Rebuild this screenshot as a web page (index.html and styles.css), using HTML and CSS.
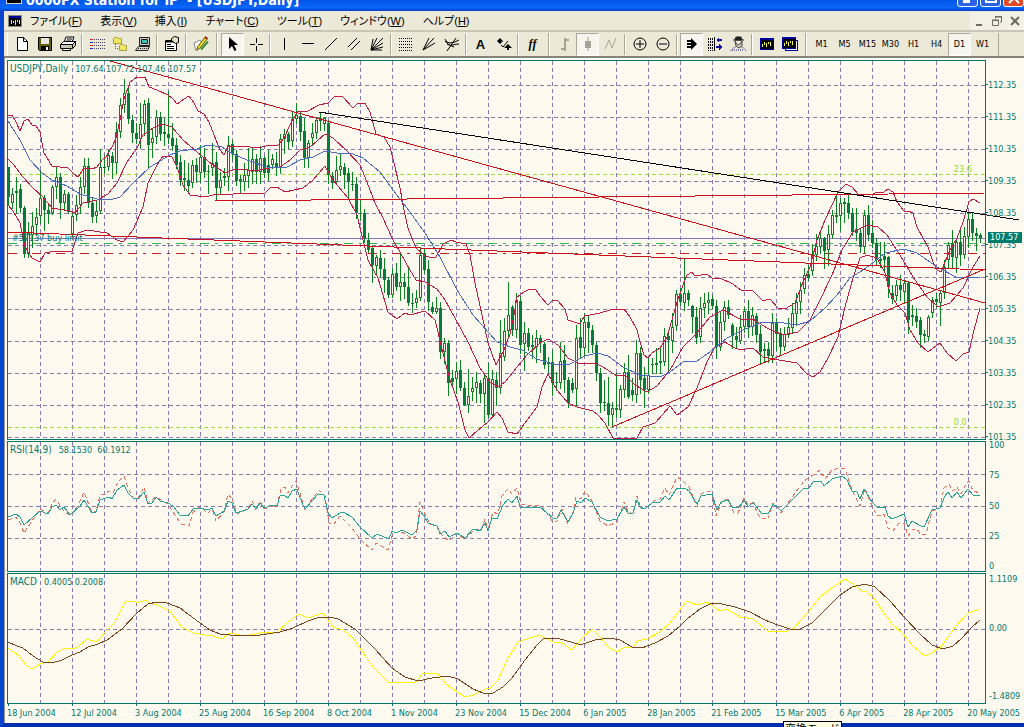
FILE: index.html
```html
<!DOCTYPE html>
<html lang="ja">
<head>
    <meta charset="UTF-8">
    <meta name="viewport" content="width=device-width, initial-scale=1.0">
    <title>FX Station - [USDJPY,Daily]</title>
    <link rel="stylesheet" href="styles.css">
</head>
<body>
    <header class="titlebar">
        <svg class="app-icon" width="16" height="14" viewBox="0 0 16 14"><rect width="16" height="14" fill="#d8d4c8"/><rect x="1" y="1" width="14" height="12" fill="#000"/><path d="M3 9l2-4 2 5 2-5 2 4 2-4" stroke="#ff0" fill="none"/></svg>
        <h1>0000FX Station for IP&nbsp; - [USDJPY,Daily]</h1>
        <div class="window-buttons">
            <button type="button" aria-label="Minimize"><svg width="20" height="20" viewBox="0 0 20 20"><path d="M5 13h7v3H5z" fill="#fff"/></svg></button>
            <button type="button" aria-label="Maximize"><svg width="20" height="20" viewBox="0 0 20 20"><path d="M5 5h10v10H5z" fill="none" stroke="#fff" stroke-width="2"/></svg></button>
            <button type="button" class="close" aria-label="Close"><svg width="20" height="20" viewBox="0 0 20 20"><path d="M5 6l10 10M15 6L5 16" stroke="#fff" stroke-width="2"/></svg></button>
        </div>
    </header>

    <main class="window">
        <nav class="menubar">
            <svg class="menu-icon" width="14" height="12" viewBox="0 0 14 12" shape-rendering="crispEdges"><rect width="14" height="12" fill="#8a8a80"/><rect x="1" y="1" width="12" height="2" fill="#0000a0"/><rect x="1" y="3" width="12" height="8" fill="#000"/><path d="M3 9V5M5 8V6M7 10V5M9 7V5M11 9V5" stroke="#e8e890"/></svg>
            <a href="#">ファイル(<u>F</u>)</a>
            <a href="#">表示(<u>V</u>)</a>
            <a href="#">挿入(<u>I</u>)</a>
            <a href="#">チャート(<u>C</u>)</a>
            <a href="#">ツール(<u>T</u>)</a>
            <a href="#">ウィンドウ(<u>W</u>)</a>
            <a href="#">ヘルプ(<u>H</u>)</a>
            <div class="mdi-buttons">
                <button type="button" aria-label="Minimize chart"><svg width="12" height="12" viewBox="0 0 12 12"><path d="M3 9h6v2H3z" fill="#6d6a60"/></svg></button>
                <button type="button" aria-label="Restore chart"><svg width="12" height="12" viewBox="0 0 12 12" fill="none" stroke="#6d6a60"><path d="M4.500 3.500V2h6v5H9M4 1.500h7M1.500 5.500h6v5h-6zM1 5h7"/></svg></button>
                <button type="button" aria-label="Close chart"><svg width="12" height="12" viewBox="0 0 12 12"><path d="M2 2l8 8M10 2l-8 8" stroke="#6d6a60" stroke-width="2"/></svg></button>
            </div>
        </nav>

        <div class="toolbar">
            <div class="group">
                <button type="button" aria-label="New chart"><svg viewBox="0 0 18 18"><path d="M4.500 2.500h6l4 4v9h-10z" fill="#fff" stroke="#000"/><path d="M10.500 2.500v4h4" fill="none" stroke="#000"/></svg></button>
                <button type="button" aria-label="Save"><svg viewBox="0 0 18 18"><path d="M2.500 2.500h13v13h-12l-1-1z" fill="#606000" stroke="#000"/><path d="M5 3h8v6H5z" fill="#e8e8e0"/><path d="M5 11h8v5H5z" fill="#000"/><path d="M10 12h2v3h-2z" fill="#fff"/></svg></button>
                <button type="button" aria-label="Print"><svg viewBox="0 0 18 18" fill="#fff" stroke="#000"><path d="M5 7l2-5h8l-2 5M1.500 9.500l3-3h12l-3 3z"/><path d="M1.500 9.500h12v4h-12zM13.500 9.500l3-3v4l-3 3z" fill="#c8c8c0"/><path d="M3.500 13.500h8v2h-8z"/><path d="M8 4h5M7 6h5" fill="none"/><path d="M10 11.500h2" stroke="#cc0"/></svg></button>
                <span class="sep"></span>
                <button type="button" aria-label="Market watch"><svg viewBox="0 0 18 18" shape-rendering="crispEdges"><path d="M6 4.500h11M6 7.500h11M6 10.500h11M6 13.500h11" stroke="#404060" stroke-dasharray="1 1"/><path d="M2 4.500h3M2 10.500h3" stroke="#e02020"/><path d="M2 7.500h3M2 13.500h3" stroke="#2020c0"/></svg></button>
                <button type="button" aria-label="Navigator"><svg viewBox="0 0 18 18"><path d="M2.500 3.500l1-1h3l1 1h3v5h-8z" fill="#f0e860" stroke="#a8a040"/><path d="M8.500 10.500l1-1h3l1 1h2v5h-7z" fill="#f0e860" stroke="#a8a040"/><path d="M4.500 9v4.500H8" fill="none" stroke="#555" stroke-dasharray="1 1"/></svg></button>
                <button type="button" aria-label="Terminal"><svg viewBox="0 0 18 18" stroke="#222"><path d="M5.500 2.500h10v8h-10z" fill="#ccc"/><path d="M7.500 4.500h6v4h-6z" fill="#40c0b0"/><path d="M4.500 11.500h11l-2 4h-12z" fill="#d8d8d0"/><path d="M4 13.500h9" stroke-dasharray="1 1"/></svg></button>
                <span class="sep"></span>
                <button type="button" aria-label="Properties"><svg viewBox="0 0 18 18" stroke="#000"><path d="M2.500 5.500h11v10h-11z" fill="#fff"/><path d="M3 6.500h10" stroke-width="2"/><path d="M4 9.500h4M4 11.500h7M4 13.500h7"/><path d="M8.500 3.500l3-2 4 1v5l-3 1-4-3z" fill="#e8e0c0"/></svg></button>
                <span class="sep"></span>
                <button type="button" aria-label="Objects"><svg viewBox="0 0 18 18"><path d="M2 8l6-3 2 3-6 8z" fill="#fff" stroke="#888"/><path d="M13.500 1.500l2 2-8 10-2.500 1.500.5-3z" fill="#f0e020" stroke="#605800"/><path d="M9 14.500l7-8" stroke="#3a8a3a" stroke-width="2"/><path d="M13 2l2.500 2" stroke="#c02020" stroke-width="2"/></svg></button>
            </div>
            <div class="group">
                <button type="button" class="pressed" aria-label="Cursor"><svg viewBox="0 0 18 18"><path d="M5 2v12l3-3 2.500 5 2-1-2.500-5h4z" fill="#000"/></svg></button>
                <button type="button" aria-label="Crosshair"><svg viewBox="0 0 18 18" shape-rendering="crispEdges"><path d="M9.500 3v5M9.500 11v5M3 9.500h5M11 9.500h5" stroke="#000"/></svg></button>
                <span class="sep"></span>
                <button type="button" aria-label="Vertical line"><svg viewBox="0 0 18 18"><path d="M8.500 3v12" stroke="#000"/></svg></button>
                <button type="button" aria-label="Horizontal line"><svg viewBox="0 0 18 18"><path d="M3 8.500h12" stroke="#000"/></svg></button>
                <button type="button" aria-label="Trend line"><svg viewBox="0 0 18 18"><path d="M3 15L15 3" stroke="#000"/></svg></button>
                <button type="button" aria-label="Channel"><svg viewBox="0 0 18 18"><path d="M3 12L12 3M6 15L15 6" stroke="#000"/></svg></button>
                <button type="button" aria-label="Gann fan"><svg viewBox="0 0 18 18"><path d="M3 15L5 4M3 15L9 3M3 15L15 3M3 15L15 8M3 15L15 12M3 15h11" stroke="#000"/></svg></button>
                <span class="sep"></span>
                <button type="button" aria-label="Fibonacci retracement"><svg viewBox="0 0 18 18" shape-rendering="crispEdges"><path d="M2 3.500h14M2 6.500h14M2 9.500h14M2 12.500h14M2 15.500h14" stroke="#000" stroke-dasharray="1 1"/></svg></button>
                <button type="button" aria-label="Fibonacci fan"><svg viewBox="0 0 18 18"><path d="M3 15L9 3M3 15L14 3M3 15L15 8" stroke="#000"/></svg></button>
                <button type="button" aria-label="Fibonacci arcs"><svg viewBox="0 0 18 18" fill="none" stroke="#000"><path d="M4 16L13 3M2 4q1 4 5 4t9-3M4 9q3 2 6 1t6-1M2 6q4 5 9 6"/></svg></button>
                <span class="sep"></span>
                <button type="button" class="letter" aria-label="Text">A</button>
                <button type="button" aria-label="Arrows"><svg viewBox="0 0 18 18"><path d="M5 3l3 3-3 3-3-3zM13 9l4 4h-3v2h-2v-2H9z" fill="#000"/><path d="M6 10l2 2 5-6" fill="none" stroke="#000"/></svg></button>
                <span class="sep"></span>
                <button type="button" class="letter italic" aria-label="Indicators">ff</button>
            </div>
            <div class="group">
                <button type="button" aria-label="Bar chart" disabled><svg viewBox="0 0 18 18" stroke="#a5a296" stroke-width="2"><path d="M9 3v13M9 5h4M5 14h4" fill="none"/></svg></button>
                <button type="button" class="pressed" aria-label="Candlesticks" disabled><svg viewBox="0 0 18 18"><path d="M9 2v14" stroke="#a5a296"/><path d="M6 6h6v7H6z" fill="#a5a296"/></svg></button>
                <button type="button" aria-label="Line chart" disabled><svg viewBox="0 0 18 18"><path d="M3 14L7 5l3 8 4-10" fill="none" stroke="#a5a296"/></svg></button>
                <span class="sep"></span>
                <button type="button" aria-label="Zoom in"><svg viewBox="0 0 18 18" fill="none" stroke="#000"><circle cx="9" cy="9" r="6"/><path d="M5 9h8M9 5v8"/></svg></button>
                <button type="button" aria-label="Zoom out"><svg viewBox="0 0 18 18" fill="none" stroke="#000"><circle cx="9" cy="9" r="6"/><path d="M5 9h8"/></svg></button>
                <span class="sep"></span>
                <button type="button" class="pressed" aria-label="Auto scroll"><svg viewBox="0 0 18 18"><path d="M8 3l6 6-6 6z" fill="#000"/><path d="M4 6h5M4 9h5M4 12h5" stroke="#000" stroke-width="2"/></svg></button>
                <button type="button" aria-label="Chart shift"><svg viewBox="0 0 18 18" shape-rendering="crispEdges"><path d="M2.500 3v13M4.500 3v13M6.500 3v13" stroke="#000" stroke-dasharray="2 1"/><path d="M8.500 2v14" stroke="#000"/><path d="M10 5l3-3v2h3v2h-3v2zM16 12l-3-3v2h-3v2h3v2z" fill="#1010a0"/></svg></button>
                <button type="button" aria-label="Expert advisors"><svg viewBox="0 0 18 18"><path d="M6 6q3 8 7 0v5l-3 2-3-2z" fill="#d8d4c0" stroke="#444"/><path d="M6 5l1-3h5l1 3zM4 5h11" fill="#222" stroke="#222"/><path d="M2 16q2-4 5-4M17 16q-2-4-5-4M3 15h12" stroke="#2020a0" stroke-dasharray="1 1" fill="none"/></svg></button>
                <span class="sep"></span>
                <button type="button" aria-label="Chart window"><svg viewBox="0 0 18 18" shape-rendering="crispEdges"><path d="M2.500 3.500h13v11h-13z" fill="#000" stroke="#0000a0"/><path d="M2 4h14" stroke="#0000a0" stroke-width="2"/><path d="M4.500 12V9M6.500 10V7M8.500 12V8M10.500 9V7M12.500 11V7" stroke="#ff4"/></svg></button>
                <button type="button" aria-label="Tile windows"><svg viewBox="0 0 18 18" shape-rendering="crispEdges"><path d="M4.500 5.500h12v10h-12z" fill="#fff" stroke="#0000a0"/><path d="M1.500 2.500h13v11h-13z" fill="#000" stroke="#0000a0"/><path d="M1 3h14" stroke="#0000a0" stroke-width="2"/><path d="M3.500 11V8M5.500 9V6M7.500 11V7M9.500 8V6M11.500 10V6" stroke="#ff4"/></svg></button>
            </div>
            <div class="group periods">
                <button type="button">M1</button>
                <button type="button">M5</button>
                <button type="button">M15</button>
                <button type="button">M30</button>
                <button type="button">H1</button>
                <button type="button">H4</button>
                <button type="button" class="pressed">D1</button>
                <button type="button">W1</button>
            </div>
        </div>

        <section class="charts">
            <!-- price -->
            <div class="panel price">
                <svg class="plot" viewBox="8 61 977 378" preserveAspectRatio="none">
                    <g class="grid" id="priceGrid"></g>
                    <path class="fibo" d="M8 174.500H985M8 427.500H985"/>
                    <path class="bid" d="M8 238.500H985"/>
                    <path class="order" d="M8 243.500H985"/>
                    <path class="stop" d="M8 253.500H985"/>
                    <g id="candles"></g>
                    <polyline class="band" points="8,116 12,115 16,122 20,131 24,121 28,119 32,125 36,126 40,132 44,153 52,166 60,167 68,168 74,174 78,177 84,168 92,169 97,167 102,160 106,157 112,147 116,138 120,120 124,99 130,82 137,77 145,77 149,87 157,90 168,95 173,99 177,104 184,99 189,96 194,103 198,111 204,114 209,122 214,135 220,150 224,155 228,146 238,146 250,147 262,147 270,145 278,145 284,138 290,125 297,112 308,111 319,105 328,103 334,97 342,96 353,108 358,103 365,103 370,112 376,134 384,137 390,147 394,163 400,188 404,210 408,228 413,241 417,249 424,255 431,258 436,257 443,244 451,240 456,242 466,244 470,255 475,283 482,315 488,343 496,365 504,350 510,334 514,315 517,297 524,292 530,289 536,290 540,296 548,305 552,301 557,300 565,309 568,320 580,324 585,315 590,315 600,313 610,310 624,309 630,317 637,330 640,342 644,355 648,358 652,353 660,348 667,337 672,320 677,302 683,285 687,275 692,272 695,276 707,274 712,278 720,278 733,284 742,291 752,290 763,301 770,299 778,308 785,309 795,303 803,282 810,267 817,240 825,220 833,203 838,192 846,184 852,187 858,194 870,195 878,192 884,192 888,189 893,192 897,202 904,211 908,211 913,213 917,227 923,238 928,247 933,262 937,270 941,272 945,262 950,250 957,238 963,222 969,202 973,199 980,203"/>
                    <polyline class="band" points="8,159 13,164 23,177 33,188 43,197 52,208 70,211 75,213 83,203 97,200 108,194 117,183 127,162 137,148 143,135 153,128 163,124 172,127 183,140 197,152 213,165 225,173 233,170 243,169 253,171 270,168 280,167 290,160 300,150 310,147 325,134 333,138 347,151 360,165 367,182 375,203 383,218 393,240 400,252 410,270 416,280 425,282 437,289 445,300 455,318 468,342 480,368 490,382 498,387 505,382 517,367 527,355 540,343 548,339 558,345 568,358 580,364 595,363 603,367 617,376 625,375 635,385 647,392 657,386 670,370 683,347 697,333 710,317 723,310 740,319 753,319 767,328 783,335 798,332 810,320 820,300 832,275 842,250 853,232 867,225 878,227 887,235 903,260 913,277 927,297 938,307 950,303 963,288 973,267 980,256"/>
                    <polyline class="band" points="8,205 13,211 20,223 25,247 32,258 40,262 45,253 55,251 72,251 78,233 87,230 107,233 117,240 123,242 133,230 143,207 148,183 157,165 163,156 172,157 177,167 183,185 190,195 205,197 217,194 233,194 257,193 264,194 270,188 277,187 285,192 303,188 313,180 325,166 333,180 348,198 357,215 363,240 368,260 378,278 388,312 397,319 405,313 410,315 425,311 435,320 443,353 450,380 458,402 465,430 469,438 477,431 488,422 497,412 502,418 508,432 517,434 522,427 537,407 542,387 548,374 557,390 568,403 577,407 593,411 598,415 605,423 613,438 637,438 643,427 655,423 670,406 677,415 688,407 697,388 707,362 715,347 725,342 733,347 740,350 753,348 763,357 773,359 797,363 807,374 813,377 820,372 828,358 838,337 845,307 853,278 860,258 867,255 877,258 885,273 890,293 897,305 905,313 910,330 918,343 928,352 940,343 947,353 956,361 963,354 969,352 974,330 980,308"/>
                    <polyline class="average" points="8,121 20,140 30,160 42,173 52,180 67,186 80,194 97,199 110,200 120,197 133,183 150,167 170,155 180,151 197,149 207,145 222,147 233,154 247,160 267,167 287,167 300,160 313,157 325,151 337,153 350,153 363,158 380,172 393,190 407,208 425,233 440,257 457,290 473,315 497,342 510,347 522,350 537,359 553,364 570,364 585,356 597,353 608,356 623,367 640,375 660,377 670,372 683,362 697,361 710,352 727,338 743,330 760,323 777,322 797,325 810,321 825,308 837,295 850,278 860,272 870,265 885,253 904,249 917,253 937,267 958,278 980,277"/>
                    <path class="trend" d="M110 61L985 303M612 427L985 269"/>
                    <path class="trend" d="M215 201L985 193M8 232L985 270"/>
                    <path class="trend long" d="M319 112L1019 220"/>
                </svg>
                <p class="caption"><span>USDJPY,Daily</span> 107.64 107.72 107.46 107.57</p>
                <p class="order-label">#57137 buy limit</p>
                <p class="fibo-label top">23.6</p>
                <p class="fibo-label bottom">0.0</p>
            </div>
            <div class="axis price-axis">
                <span>112.35</span><span>111.35</span><span>110.35</span><span>109.35</span>
                <span>108.35</span><span>107.35</span><span>106.35</span><span>105.35</span>
                <span>104.35</span><span>103.35</span><span>102.35</span><span>101.35</span>
                <b class="bid-tag">107.57</b>
            </div>

            <!-- RSI -->
            <div class="panel">
                <svg class="plot" viewBox="8 442 977 129" preserveAspectRatio="none">
                    <g class="grid" id="rsiGrid"></g>
                    <polyline class="rsi-fast" points="8,520 16,517 20,523 24,533 30,524 40,509 48,513 52,504 56,499 62,509 70,516 78,506 84,492 92,513 96,511 100,495 105,494 109,491 113,493 118,482 124,476 128,488 133,498 138,498 144,487 148,503 156,497 168,504 175,515 181,524 189,526 193,512 200,507 208,513 212,509 216,521 224,512 228,494 232,499 237,514 248,509 252,501 256,510 260,501 264,509 272,506 277,506 281,489 285,487 288,493 292,486 296,481 300,493 305,510 312,499 319,490 325,496 329,523 333,525 340,516 352,528 360,539 372,550 376,543 388,550 393,533 402,532 412,539 416,536 420,502 425,514 430,524 437,526 442,535 449,541 457,533 465,540 475,529 481,530 485,519 488,530 493,512 498,514 502,496 508,489 512,494 517,488 521,504 533,506 540,505 547,513 553,522 557,521 562,509 568,524 573,512 576,497 581,499 585,491 592,501 600,521 608,526 617,522 624,502 628,512 633,514 637,496 641,508 645,509 654,501 660,499 665,488 669,495 677,477 683,481 689,487 697,507 701,494 708,491 712,493 716,516 722,501 728,499 734,513 738,513 744,498 748,505 753,503 760,518 768,519 773,503 778,507 781,513 793,496 804,481 813,475 820,470 825,479 832,470 840,468 845,469 852,490 860,506 865,489 872,506 877,516 884,514 888,528 893,531 898,524 904,523 908,536 912,530 917,529 921,535 926,534 932,511 940,508 944,488 949,484 953,491 957,487 961,494 965,486 969,481 973,491 980,493"/>
                    <polyline class="rsi" points="8,517 16,514 20,517 24,525 32,518 40,511 48,514 52,507 56,505 60,510 64,507 70,515 80,506 84,500 92,513 96,512 100,500 109,497 112,499 117,490 124,485 128,493 133,498 138,499 144,492 148,504 152,503 156,497 160,501 168,503 173,506 180,515 188,516 193,509 200,508 208,510 212,508 216,516 224,511 228,501 232,503 236,513 248,509 252,504 256,509 260,503 264,508 272,505 277,506 280,496 284,495 288,498 292,491 297,489 300,498 305,509 312,501 318,494 324,495 328,513 332,518 340,513 343,512 352,517 360,527 372,538 377,534 389,539 392,531 396,533 402,530 412,535 417,530 420,511 424,516 428,523 437,526 440,534 445,531 449,537 457,533 465,538 473,529 480,531 485,523 488,531 492,518 497,519 503,505 508,499 512,503 517,496 520,507 533,508 540,507 547,513 553,518 557,518 561,510 568,522 573,513 577,501 581,503 585,498 592,502 600,517 608,521 617,519 624,507 628,513 633,513 637,500 640,507 645,509 652,503 660,502 665,496 669,500 677,488 685,488 689,491 697,504 701,496 712,494 717,510 721,502 728,500 733,508 739,507 744,500 748,507 753,502 761,513 768,514 773,504 777,507 781,511 793,499 804,488 809,488 813,482 821,481 824,486 832,479 842,476 847,480 852,491 857,492 860,499 864,489 872,502 877,507 885,507 888,516 892,519 904,514 908,527 912,521 921,526 924,527 932,510 940,508 945,496 948,492 952,498 957,492 961,498 968,489 973,495 980,496"/>
                </svg>
                <p class="caption"><span>RSI(14,9)</span> 58.1530&nbsp; 60.1912</p>
            </div>
            <div class="axis rsi-axis">
                <span>100</span><span>75</span><span>50</span><span>25</span><span>0</span>
            </div>

            <!-- MACD -->
            <div class="panel">
                <svg class="plot" viewBox="8 574 977 129" preserveAspectRatio="none">
                    <g class="grid" id="macdGrid"></g>
                    <polyline class="macd" points="8,648 18,655 27,666 32,669 40,664 48,662 57,652 65,648 72,649 78,647 87,639 97,642 105,632 115,622 125,602 132,601 138,603 145,600 150,603 160,606 170,611 182,627 193,633 213,636 222,639 230,633 245,636 260,633 277,632 287,623 299,614 308,618 323,613 333,627 343,630 353,638 373,667 388,682 398,682 415,683 422,674 437,673 447,685 465,697 473,695 485,689 490,688 498,680 508,658 518,642 530,638 540,635 553,642 562,643 572,650 583,637 592,629 600,637 608,647 617,652 623,648 633,647 637,641 647,639 660,632 670,623 678,612 687,601 697,605 707,602 720,611 727,609 740,617 753,619 768,631 787,631 795,627 808,612 820,597 832,588 845,579 853,584 862,591 867,592 873,597 883,612 893,625 903,634 913,646 925,656 930,654 942,646 955,627 968,613 980,609"/>
                    <polyline class="signal" points="8,642 17,646 23,648 33,656 43,662 52,663 62,660 72,655 80,652 88,647 98,644 107,640 122,629 137,613 148,604 157,602 167,603 180,608 200,623 210,630 220,634 230,635 247,636 260,635 280,632 293,628 308,621 320,617 330,617 338,619 355,629 375,649 392,668 405,677 418,681 432,678 448,676 458,679 473,689 483,693 493,693 503,687 512,678 525,660 537,645 543,639 550,638 560,639 578,644 583,644 595,640 610,638 620,640 632,647 642,648 655,643 668,636 680,626 687,619 700,609 712,603 722,604 735,607 750,612 765,620 778,625 790,629 800,629 812,623 825,610 840,595 852,587 865,584 875,587 890,601 905,618 920,634 932,645 943,649 953,646 962,638 972,627 980,620"/>
                </svg>
                <p class="caption"><span>MACD</span> 0.4005 0.2008</p>
            </div>
            <div class="axis macd-axis">
                <span>1.1109</span><span>0.00</span><span>-1.4809</span>
            </div>

            <div class="dates">
                <span>18 Jun 2004</span><span>12 Jul 2004</span><span>3 Aug 2004</span><span>25 Aug 2004</span>
                <span>16 Sep 2004</span><span>8 Oct 2004</span><span>1 Nov 2004</span><span>23 Nov 2004</span>
                <span>15 Dec 2004</span><span>6 Jan 2005</span><span>28 Jan 2005</span><span>21 Feb 2005</span>
                <span>15 Mar 2005</span><span>6 Apr 2005</span><span>28 Apr 2005</span><span>20 May 2005</span>
            </div>
        </section>
    </main>
    <div class="ime-tip">変換モード</div>

    <script src="chart.js"></script>
</body>
</html>
```
FILE: styles.css
```css
* {
    box-sizing: border-box;
}
html, body {
    height: 100%;
}
body {
    margin: 0;
    display: flex;
    flex-direction: column;
    overflow: hidden;
    background: #ece9d8;
    font-family: "Liberation Sans", "Noto Sans CJK JP", sans-serif;
    font-size: 12px;
    color: #000;
}
p, h1 {
    margin: 0;
}
button {
    font: inherit;
    padding: 0;
    border: 0;
    background: none;
}

/* title bar, pushed over the top edge of the screen */
.titlebar {
    flex: none;
    height: 11px;
    display: flex;
    align-items: flex-end;
    padding: 0 0 4px 6px;
    background: linear-gradient(#0054e3 0, #0a66fc 70%, #0040c8 100%);
    color: #fff;
}
.titlebar h1 {
    flex: 1;
    margin-left: 4px;
    font: bold 14px/14px "DejaVu Sans Condensed", "DejaVu Sans", sans-serif;
    white-space: nowrap;
}
.app-icon {
    flex: none;
    margin-bottom: 3px;
}
.window-buttons {
    display: flex;
    gap: 2px;
}
.window-buttons button {
    width: 21px;
    height: 21px;
    border: 1px solid #fff;
    border-radius: 3px;
    background: #2a64e0;
}
.window-buttons .close {
    background: #e04a28;
}
.window-buttons svg {
    display: block;
}

.window {
    flex: 1;
    display: flex;
    flex-direction: column;
    min-height: 0;
    border-left: 4px solid #0846d0;
    border-bottom: 4px solid #0030b0;
}

/* menu */
.menubar {
    flex: none;
    height: 19px;
    display: flex;
    align-items: center;
    gap: 18px;
    padding-left: 4px;
    font-size: 11px;
    line-height: 16px;
    font-feature-settings: "palt";
}
.menubar a {
    color: #000;
    text-decoration: none;
    white-space: nowrap;
}
.menu-icon {
    margin-right: -10px;
}
.mdi-buttons {
    margin-left: auto;
    display: flex;
}
.mdi-buttons button {
    width: 18px;
    height: 18px;
    display: grid;
    place-items: center;
    background: #f3f1e6;
}

/* toolbar */
.toolbar {
    flex: none;
    height: 28px;
    display: flex;
    align-items: center;
    padding-left: 3px;
    border-top: 2px solid #c9c6b5;
    border-bottom: 2px solid #85827a;
}
.group {
    display: flex;
    height: 23px;
    padding: 0 4px 0 3px;
    border-left: 1px solid #fff;
    border-right: 1px solid #aca899;
}
.group:first-child {
    padding-left: 2px;
}
.toolbar button {
    width: 23px;
    height: 23px;
    display: grid;
    place-items: center;
}
.toolbar svg {
    width: 18px;
    height: 18px;
}
.toolbar .pressed {
    background: #f6f5ee;
    border: 1px solid;
    border-color: #aca899 #fff #fff #aca899;
}
.toolbar .letter {
    font: bold 13px "Liberation Sans", sans-serif;
    color: #000;
}
.toolbar .italic {
    font: italic bold 12px "Liberation Serif", serif;
}
.periods button {
    font: 9px "DejaVu Sans Condensed", "DejaVu Sans", sans-serif;
    color: #000;
}
.sep {
    width: 2px;
    margin: 1px 2px;
    border-left: 1px solid #aca899;
    border-right: 1px solid #fff;
}

/* charts */
.charts {
    flex: 1;
    display: grid;
    grid-template-columns: 1fr 38px;
    grid-template-rows: auto auto auto 1fr;
    row-gap: 1px;
    padding: 2px 0 0 2px;
    border-left: 1px solid #9a9890;
    background: #fffaf0;
    font: 9px/12px "DejaVu Sans Condensed", "DejaVu Sans", sans-serif;
    color: #00786a;
}
.panel {
    position: relative;
    height: 131px;
}
.price {
    height: 380px;
}
.plot {
    display: block;
    width: 100%;
    height: 100%;
    border: 1px solid #007868;
    overflow: visible;
    shape-rendering: crispEdges;
}
.plot path, .plot polyline {
    fill: none;
    stroke-width: 1;
}
.caption {
    position: absolute;
    top: 3px;
    left: 3px;
    display: flex;
    gap: 7px;
    white-space: nowrap;
}
.caption span {
    font-size: 10px;
}
.order-label {
    position: absolute;
    top: 172px;
    left: 5px;
}
.fibo-label {
    position: absolute;
    left: 96%;
    padding-left: 7px;
    color: #8fdc28;
}
.fibo-label.top {
    top: 103px;
}
.fibo-label.bottom {
    top: 356px;
}
.plot .grid path {
    stroke: #8a7ab0;
    stroke-dasharray: 4 3;
}
.plot .fibo {
    stroke: #9be030;
    stroke-dasharray: 4 3;
}
.plot .bid {
    stroke: #8478c8;
}
.plot .order {
    stroke: #2fb84c;
    stroke-dasharray: 9 6 3 6;
}
.plot .stop {
    stroke: #c02020;
    stroke-dasharray: 9 6 3 6;
}
.plot .band {
    stroke: #c01c44;
}
.plot .average {
    stroke: #4a6cc4;
}
.plot .trend {
    stroke: #cc1018;
}
.plot .long {
    stroke: #000;
}
.wick {
    fill: #0a8420;
}
.down {
    fill: #047c3c;
}
.up {
    fill: #0a8420;
}
.inside {
    fill: #fffaf0;
}
.plot .rsi {
    stroke: #2aa294;
}
.plot .rsi-fast {
    stroke: #e8705c;
    stroke-dasharray: 4 3;
}
.plot .macd {
    stroke: #fff800;
}
.plot .signal {
    stroke: #7c4420;
}

/* scales */
.axis {
    position: relative;
    display: flex;
    flex-direction: column;
    padding-left: 2px;
}
.price-axis {
    height: 380px;
    padding-top: 9px;
    overflow: hidden;
}
.price-axis span {
    flex: none;
    height: 32px;
    line-height: 32px;
}
.price-axis span::before {
    content: "";
    display: inline-block;
    width: 2px;
    height: 1px;
    margin: 0 0 3px -2px;
    background: #00786a;
}
.bid-tag {
    position: absolute;
    top: 172px;
    left: 2px;
    width: 34px;
    line-height: 11px;
    background: #007c6c;
    color: #fff;
    font-weight: normal;
    padding-left: 2px;
}
.rsi-axis {
    justify-content: space-between;
    padding-left: 3px;
    margin-top: -2px;
}
.macd-axis {
    display: grid;
    grid-template-rows: 49px 68px 12px;
    padding-left: 3px;
}
.dates {
    display: flex;
    white-space: nowrap;
}
.dates span {
    flex: 0 0 6.54%;
    padding-top: 2px;
}
.dates span::before {
    content: "";
    display: block;
    width: 1px;
    height: 2px;
    margin: -3px 0 1px 1px;
    background: #00786a;
}

.ime-tip {
    position: absolute;
    left: 783px;
    bottom: -12px;
    height: 18px;
    padding: 0 1px;
    border: 1px solid #000;
    background: #ffffe1;
    font-size: 11px;
    line-height: 14px;
    white-space: nowrap;
}
```
FILE: chart.js
```js
// high, body top, body bottom, low, 1 = close above open
const candles = [
    [167,167,197,205,0],[188,194,203,208,1],[177,191,193,213,0],[184,189,208,212,0],[206,208,253,257,0],[222,233,254,257,1],
    [212,226,235,247,1],[208,217,225,235,1],[170,198,216,223,1],[195,198,210,230,0],[203,210,214,223,0],[185,187,213,214,1],
    [167,177,187,198,1],[173,177,203,218,0],[190,194,203,210,1],[192,194,212,213,0],[212,216,234,235,1],[195,205,215,220,1],
    [177,187,205,213,1],[158,166,187,193,1],[158,166,203,207,0],[197,203,217,222,0],[200,211,216,222,1],[149,167,211,213,1],
    [155,167,168,173,0],[150,155,167,170,1],[152,156,163,178,0],[122,132,163,173,1],[98,105,132,137,1],[79,93,105,112,1],
    [87,93,119,123,0],[115,120,133,142,0],[123,133,139,143,0],[103,124,139,148,1],[100,104,124,135,1],[98,103,145,167,0],
    [128,138,143,157,1],[110,117,137,143,1],[112,117,134,140,0],[118,132,134,145,0],[91,134,138,143,0],[123,138,146,150,0],
    [138,145,165,168,0],[155,162,180,185,0],[160,178,180,190,0],[163,180,186,193,0],[160,165,183,187,1],[158,165,172,182,0],
    [145,157,173,182,1],[148,157,172,177,0],[165,171,172,193,0],[143,163,168,175,1],[152,162,188,200,0],[172,180,188,193,1],
    [168,176,178,185,0],[136,145,177,190,1],[140,144,154,160,0],[150,154,181,185,0],[175,179,181,192,0],[163,175,182,190,1],
    [148,170,176,187,1],[147,159,172,183,1],[154,159,172,183,0],[146,158,172,183,1],[156,158,173,177,0],[150,165,173,180,0],
    [154,159,165,168,1],[152,163,168,175,0],[134,139,168,173,1],[129,134,139,153,1],[132,134,142,148,0],[112,119,141,146,1],
    [103,115,119,123,1],[112,116,132,140,0],[118,131,158,167,0],[140,143,158,167,1],[123,133,138,145,1],[117,120,133,138,1],
    [112,118,121,130,0],[117,118,124,130,1],[120,123,175,183,0],[172,176,183,188,0],[156,170,182,183,1],[153,166,170,175,1],
    [163,167,175,188,0],[168,173,182,198,0],[172,184,185,190,0],[177,184,213,218,0],[200,213,214,220,0],[209,213,238,242,0],
    [233,240,250,252,0],[247,248,265,282,0],[255,257,266,273,1],[250,258,269,277,0],[258,269,280,292,0],[277,280,295,297,0],
    [268,274,295,297,1],[263,273,287,290,0],[253,282,287,300,1],[273,282,287,298,0],[267,287,303,305,0],[293,303,304,312,0],
    [290,298,303,307,1],[247,255,298,300,1],[248,253,270,273,0],[260,269,302,310,0],[302,307,312,313,0],[297,308,312,313,1],
    [302,308,352,358,0],[338,343,352,363,1],[340,343,383,395,0],[370,378,382,387,0],[362,371,379,393,1],[360,370,388,390,0],
    [382,388,405,405,0],[369,396,405,412,1],[377,388,392,400,1],[372,382,388,402,1],[380,383,394,402,0],[375,378,394,422,1],
    [363,378,415,417,0],[370,379,415,417,1],[372,380,388,405,0],[320,353,388,393,1],[318,331,357,360,1],[282,315,331,337,1],
    [305,307,330,335,0],[293,300,330,337,1],[296,301,345,353,0],[322,333,344,370,1],[328,333,347,350,0],[335,345,347,358,0],
    [330,338,347,362,1],[335,338,343,352,0],[342,344,365,368,0],[357,363,364,372,0],[350,362,383,395,0],[372,382,383,390,0],
    [342,361,383,388,1],[345,360,380,392,0],[377,380,403,407,0],[378,383,390,392,0],[325,338,389,405,1],[318,337,348,357,0],
    [313,322,348,355,1],[315,322,328,352,0],[325,330,345,352,0],[342,345,373,380,0],[368,373,403,412,0],[380,402,403,410,0],
    [377,403,415,425,0],[402,408,415,427,1],[373,408,410,417,0],[385,389,410,417,1],[363,372,390,397,1],[355,372,397,398,0],
    [378,390,395,400,0],[340,353,395,402,1],[347,353,380,393,0],[367,378,390,407,0],[358,375,390,393,1],[358,364,365,373,0],
    [348,363,365,373,0],[348,361,363,373,0],[328,336,362,365,1],[333,336,340,370,0],[313,327,341,352,1],[290,294,326,330,1],
    [288,294,302,305,0],[259,293,303,310,1],[290,293,300,305,0],[305,306,317,332,0],[307,317,338,343,0],[297,308,337,342,1],
    [293,303,308,317,1],[292,300,303,313,1],[295,299,306,308,0],[300,306,347,358,0],[312,322,347,350,1],[301,307,322,330,1],
    [300,307,315,318,0],[323,325,336,348,0],[327,336,340,347,0],[315,327,341,343,1],[307,311,327,332,1],[300,311,327,337,0],
    [307,315,327,335,1],[313,316,335,342,0],[325,334,352,363,0],[343,349,351,362,0],[342,349,356,362,0],[313,323,356,362,1],
    [318,323,334,350,0],[328,333,347,355,0],[327,334,347,350,1],[318,327,335,337,1],[303,313,328,333,1],[293,302,314,325,1],
    [282,290,302,313,1],[268,275,289,293,1],[265,274,278,280,0],[244,254,271,275,1],[234,246,255,260,1],[233,238,247,253,1],
    [237,238,251,268,0],[225,234,250,265,1],[210,215,235,238,1],[195,215,217,222,0],[198,203,216,230,1],[198,202,204,222,0],
    [193,203,213,218,0],[208,213,232,235,0],[208,229,233,240,0],[228,233,247,252,0],[210,215,247,252,1],[205,215,235,240,0],
    [220,233,243,247,0],[238,243,260,265,0],[242,259,261,267,0],[242,256,260,270,0],[256,257,287,297,0],[285,293,299,303,0],
    [280,285,296,300,1],[275,285,290,300,0],[280,283,292,302,1],[282,283,320,333,0],[305,315,317,325,0],[308,316,322,327,0],
    [317,320,335,347,0],[330,334,336,342,0],[315,317,337,340,1],[297,300,313,317,1],[293,299,302,307,0],[290,293,303,325,1],
    [260,267,293,298,1],[242,245,260,268,1],[230,243,257,267,0],[238,242,258,272,1],[230,242,255,265,0],[227,236,255,258,1],
    [213,219,237,247,1],[212,219,233,240,0],[228,233,236,250,0],[233,235,238,242,0]
];

function rect(cls, x, y, w, h) {
    return `<rect class="${cls}" x="${x}" y="${y}" width="${w}" height="${h}"/>`;
}

function drawCandles() {
    let out = "";
    candles.forEach(([high, top, bottom, low, up], i) => {
        const x = 8 + i * 4;
        const body = Math.max(bottom - top, 1);
        out += rect("wick", x, high, 1, low - high + 1);
        out += rect(up ? "up" : "down", x - 1, top, 3, body);
        if (up && body > 2) {
            out += rect("inside", x, top + 1, 1, body - 2);
        }
    });
    document.getElementById("candles").innerHTML = out;
}

function drawGrid(id, top, bottom, levels) {
    let d = "";
    for (let x = 40; x < 985; x += 32) {
        d += `M${x + 0.5} ${top}V${bottom}`;
    }
    levels.forEach(y => d += `M8 ${y + 0.5}H985`);
    document.getElementById(id).innerHTML = `<path d="${d}"/>`;
}

const priceLevels = [];
for (let y = 85; y < 440; y += 32) {
    priceLevels.push(y);
}
drawGrid("priceGrid", 61, 439, priceLevels);
drawGrid("rsiGrid", 442, 571, [474, 506, 538]);
drawGrid("macdGrid", 574, 703, [629]);
drawCandles();
```
